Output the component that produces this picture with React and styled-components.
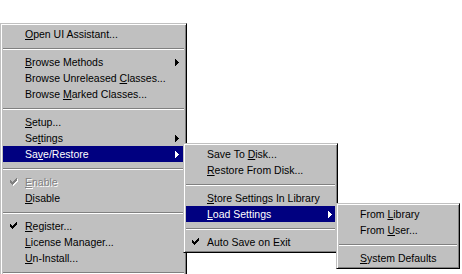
import React from 'react';
import styled, { createGlobalStyle } from 'styled-components';

const Global = createGlobalStyle`
  html, body { margin: 0; padding: 0; background: #fff; overflow: hidden; }
  body { font-family: "Liberation Sans", Arial, sans-serif; }
`;

const Desktop = styled.div`
  position: relative;
  width: 462px;
  height: 274px;
  overflow: hidden;
  background: #fff;
`;

const Menu = styled.div`
  position: absolute;
  left: ${(p) => p.$x}px;
  top: ${(p) => p.$y}px;
  width: ${(p) => p.$w}px;
  z-index: ${(p) => p.$z};
  box-sizing: border-box;
  display: flex;
  flex-direction: column;
  background: #c0c0c0;
  border: 1px solid;
  border-color: #c0c0c0 #000 #000 #c0c0c0;
  box-shadow: inset 1px 1px #fff, inset -1px -1px #808080;
  padding: 2px 2px ${(p) => p.$bottom || 2}px 2px;
`;

const Item = styled.div`
  display: flex;
  align-items: center;
  height: 16px;
  font-size: 10.5px;
  white-space: nowrap;
  background: ${(p) => (p.$active ? '#000080' : 'transparent')};
  color: ${(p) => (p.$active ? '#fff' : p.$disabled ? '#808080' : '#000')};
  text-shadow: ${(p) => (p.$disabled ? '1px 1px 0 #fff' : 'none')};
`;

const Gutter = styled.span`
  flex: none;
  width: ${(p) => p.$w}px;
  box-sizing: border-box;
  padding-left: ${(p) => p.$checkX}px;
  display: flex;
  align-items: center;
`;

const Label = styled.span`
  flex: 1;
  line-height: 16px;
`;

const Key = styled.span`
  text-decoration: underline;
  text-underline-offset: 1px;
  text-decoration-thickness: 1px;
`;

const ArrowBox = styled.span`
  flex: none;
  display: flex;
  margin-right: ${(p) => p.$pad}px;
`;

const Separator = styled.div`
  height: 12px;
  box-sizing: border-box;
  padding-top: 6px;
  &::before {
    content: '';
    display: block;
    height: 1px;
    background: #808080;
    border-bottom: 1px solid #fff;
  }
`;

const CheckIcon = ({ color, shadow }) => (
  <svg width="8" height="8" viewBox="0 0 8 8" shapeRendering="crispEdges">
    {shadow && (
      <path
        transform="translate(1 1)"
        fill="#fff"
        d="M6 0h1v1H6zM5 1h2v1H5zM0 2h1v1H0zM4 2h3v1H4zM0 3h2v1H0zM3 3h3v1H3zM0 4h5v1H0zM1 5h3v1H1zM2 6h1v1H2z"
      />
    )}
    <path
      fill={color}
      d="M6 0h1v1H6zM5 1h2v1H5zM0 2h1v1H0zM4 2h3v1H4zM0 3h2v1H0zM3 3h3v1H3zM0 4h5v1H0zM1 5h3v1H1zM2 6h1v1H2z"
    />
  </svg>
);

const ArrowIcon = ({ color }) => (
  <svg width="4" height="7" viewBox="0 0 4 7" shapeRendering="crispEdges">
    <path fill={color} d="M0 0h1v7H0zM1 1h1v5H1zM2 2h1v3H2zM3 3h1v1H3z" />
  </svg>
);

function renderLabel(text) {
  const i = text.indexOf('&');
  if (i < 0) return text;
  return (
    <>
      {text.slice(0, i)}
      <Key>{text[i + 1]}</Key>
      {text.slice(i + 2)}
    </>
  );
}

function MenuList({ items, gutter, checkX, arrowPad }) {
  return items.map((it, idx) => {
    if (it === '-') return <Separator key={idx} />;
    const fg = it.active ? '#fff' : it.disabled ? '#808080' : '#000';
    return (
      <Item key={idx} $active={it.active} $disabled={it.disabled}>
        <Gutter $w={gutter} $checkX={checkX}>
          {it.checked && <CheckIcon color={fg} shadow={it.disabled} />}
        </Gutter>
        <Label>{renderLabel(it.label)}</Label>
        {it.sub && (
          <ArrowBox $pad={arrowPad}>
            <ArrowIcon color={fg} />
          </ArrowBox>
        )}
      </Item>
    );
  });
}

const mainItems = [
  { label: '&Open UI Assistant...' },
  '-',
  { label: '&Browse Methods', sub: true },
  { label: 'Browse Unreleased &Classes...' },
  { label: 'Browse &Marked Classes...' },
  '-',
  { label: '&Setup...' },
  { label: 'Se&ttings', sub: true },
  { label: 'Sa&ve/Restore', sub: true, active: true },
  '-',
  { label: '&Enable', checked: true, disabled: true },
  { label: '&Disable' },
  '-',
  { label: '&Register...', checked: true },
  { label: '&License Manager...' },
  { label: '&Un-Install...' },
  '-',
];

const saveItems = [
  { label: 'Save To &Disk...' },
  { label: '&Restore From Disk...' },
  '-',
  { label: '&Store Settings In Library' },
  { label: '&Load Settings', sub: true, active: true },
  '-',
  { label: 'Auto Save on Exit', checked: true },
];

const loadItems = [
  { label: 'From &Library' },
  { label: 'From &User...' },
  '-',
  { label: '&System Defaults' },
];

export default function App() {
  return (
    <>
      <Global />
      <Desktop>
        <Menu $x={0} $y={23} $w={187} $z={1} $bottom={20}>
          <MenuList items={mainItems} gutter={22} checkX={7} arrowPad={5} />
        </Menu>
        <Menu $x={183} $y={143} $w={155} $z={2}>
          <MenuList items={saveItems} gutter={21} checkX={6} arrowPad={3} />
        </Menu>
        <Menu $x={336} $y={203} $w={124} $z={3}>
          <MenuList items={loadItems} gutter={21} checkX={6} arrowPad={3} />
        </Menu>
      </Desktop>
    </>
  );
}
